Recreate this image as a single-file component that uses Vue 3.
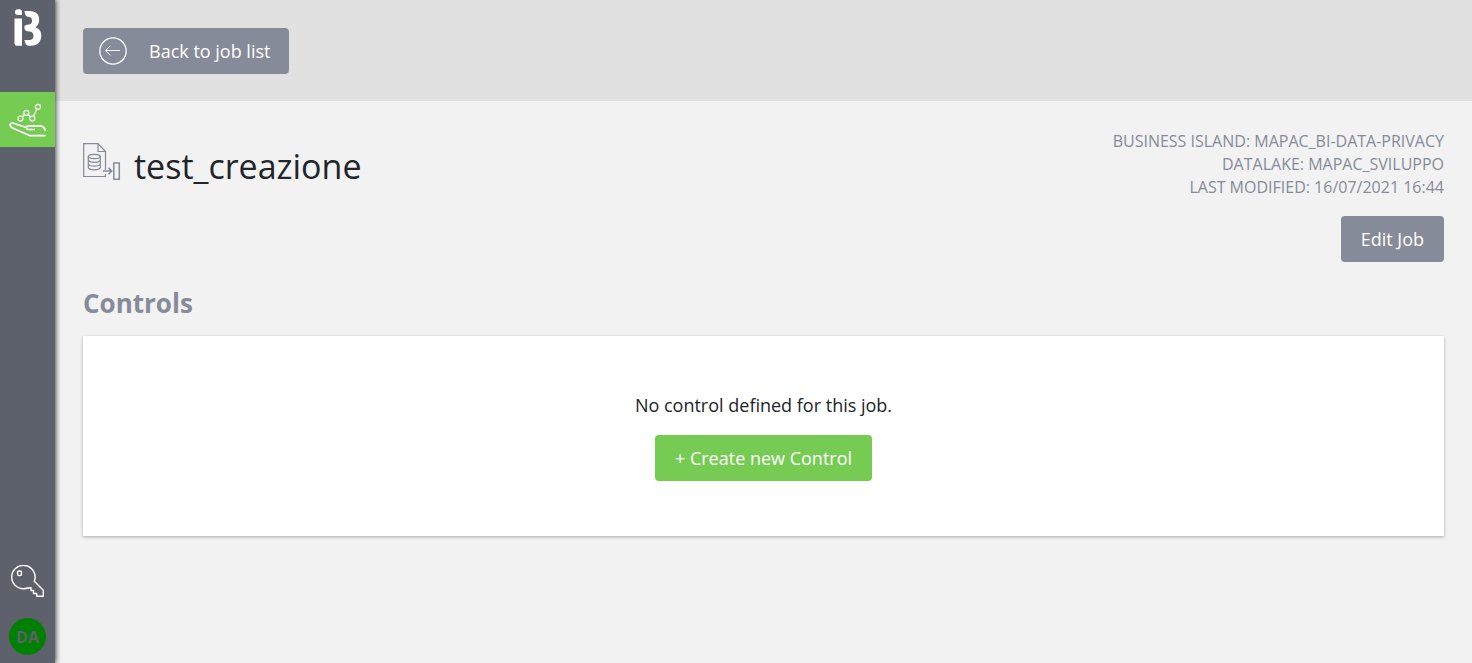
<script setup>
const details = [
  { label: 'Business Island', value: 'MAPAC_BI-data-privacy' },
  { label: 'Datalake', value: 'MAPAC_SVILUPPO' },
  { label: 'Last modified', value: '16/07/2021 16:44' },
]
</script>

<template>
  <div class="app">
    <aside class="sidebar">
      <a class="logo" href="#" aria-label="Home">
        <svg width="28" height="38" viewBox="0 0 28 38" fill="#fff">
          <path d="M1 3Q1 .3 4 .3H5.500Q8 .3 8 3V6H3.500Q1 5.500 1 4Z" />
          <path d="M0.500 9.500H8V36.700H3Q0.500 36.700 0.500 34.500Z" />
          <path d="M10.500 2H15.500C22 2 25.200 5.500 25.200 10.500C25.200 14 24 16.500 21.500 18.300C25.500 20 27.300 22.500 27.300 26.500C27.300 33 23.500 36.700 17 36.700H14.500Q11 36.300 10.500 31H16C18.500 31 19.500 29 19.500 26.800C19.500 24.500 18 22.500 15.500 22.500Q11.500 22.500 10.500 20V17Q11.500 15.500 14.500 15.500C17 15.500 18 14 18 12C18 9.500 17 8 15 8Q10.500 7.500 10.500 2Z" />
        </svg>
      </a>
      <nav class="nav">
        <a class="nav-item" href="#" aria-label="Jobs">
          <svg width="38" height="36" viewBox="0 0 38 36" fill="none" stroke="#fff" stroke-width="1.200">
            <circle cx="11.500" cy="16.500" r="2.500" />
            <circle cx="17.300" cy="10.800" r="2.500" />
            <circle cx="23.300" cy="16.500" r="2.500" />
            <circle cx="29" cy="4.800" r="2.500" />
            <path d="M13.200 14.700l2.300-2.200M19.100 12.500l2.400 2.200M24.400 14.200l3.500-7.200" />
            <g stroke-width="1.700">
              <path d="M26 27.500H19Q16 26 18.500 23.800H31.500Q35.500 24.500 36.500 29" />
              <path d="M17.500 25.500L3.800 21.200Q1 20.800 1 23Q1.500 25 3.500 26L21 33.700H36.500" />
            </g>
          </svg>
        </a>
      </nav>
      <a class="key" href="#" aria-label="Credentials">
        <svg width="34" height="34" viewBox="0 0 34 34" fill="none" stroke="#fff" stroke-width="1.400" stroke-linejoin="round">
          <path d="M16.500 23A11.700 11.700 0 1 1 23.300 16.300L32.300 25.200V31.300H25.700V28.500H22.500V25.500H20V22.800Z" />
          <rect x="6.500" y="6" width="4" height="4.500" rx="1.500" />
        </svg>
      </a>
      <button class="avatar" type="button">DA</button>
    </aside>

    <div class="page">
      <header class="topbar">
        <button class="btn back" type="button">
          <svg width="28" height="28" viewBox="0 0 28 28" fill="none" stroke="#fff">
            <circle cx="14" cy="14" r="13.200" stroke-width="1.300" />
            <path d="M21 13.500H6.500M11.500 8.700L6.500 13.500L11.500 18.300" stroke-width="0.900" />
          </svg>
          <span>Back to job list</span>
        </button>
      </header>

      <main class="content">
        <section class="job">
          <div class="title">
            <svg width="38" height="38" viewBox="0 0 38 38" fill="none" stroke="#868b9a" stroke-width="1.200">
              <path d="M22.500 27V8.500L15 .7H.7V33.500H22.500V31" />
              <path d="M15 .7V8.500H22.500" />
              <ellipse cx="11.300" cy="13.500" rx="6" ry="2.200" />
              <path d="M5.300 13.500V24.500Q6 26.800 11.300 26.800T17.300 24.500V13.500M5.300 17Q6 19.300 11.300 19.300T17.300 17M5.300 20.800Q6 23.100 11.300 23.100T17.300 20.800" />
              <path d="M20 28H28.500M25.500 24.800L28.700 28L25.500 31.200" stroke-width="1.500" />
              <rect x="30.800" y="20" width="5.500" height="16.300" stroke-width="1.500" />
            </svg>
            <h1>test_creazione</h1>
          </div>
          <div class="info">
            <p v-for="item in details" :key="item.label">{{ item.label }}: {{ item.value }}</p>
            <button class="btn edit" type="button">Edit Job</button>
          </div>
        </section>

        <section>
          <h2>Controls</h2>
          <div class="card">
            <p>No control defined for this job.</p>
            <button class="btn create" type="button">+ Create new Control</button>
          </div>
        </section>
      </main>
    </div>
  </div>
</template>

<style>
body {
  margin: 0;
  background: #f2f2f2;
}
</style>

<style scoped>
.app {
  display: flex;
  min-height: 100vh;
  font-family: "Segoe UI", "Open Sans", "Noto Sans", sans-serif;
  font-size: 18px;
  line-height: 28px;
  color: #212529;
  background: #f2f2f2;
}

h1,
h2,
p {
  margin: 0;
}

svg {
  display: block;
  flex: none;
}

.sidebar {
  display: flex;
  flex: none;
  flex-direction: column;
  align-items: center;
  box-sizing: border-box;
  width: 55px;
  padding: 9px 0 8px;
  background: #5d616c;
  box-shadow: 1px 0 5px rgba(0, 0, 0, 0.7);
  z-index: 1;
}

.nav {
  flex: 1;
  align-self: stretch;
  margin-top: 45px;
}

.nav-item {
  display: flex;
  align-items: center;
  justify-content: center;
  height: 55px;
  background: #76cc52;
}

.key {
  margin-bottom: 19px;
}

.avatar {
  width: 37px;
  height: 37px;
  padding: 0;
  border: 0;
  border-radius: 50%;
  background: #008000;
  color: #5d616c;
  font: bold 16px "Open Sans", sans-serif;
}

.page {
  flex: 1;
  min-width: 0;
}

.topbar {
  padding: 28px 28px 27px;
  background: #e1e1e1;
}

.btn {
  display: flex;
  align-items: center;
  justify-content: center;
  height: 46px;
  padding: 0 20px;
  border: 0;
  border-radius: 4px;
  background: #868b99;
  color: #fff;
  font: inherit;
  cursor: pointer;
}

.back {
  gap: 22px;
  padding: 0 19px 0 16px;
}

.content {
  padding: 28px;
}

.job {
  display: flex;
  justify-content: space-between;
}

.title {
  display: flex;
  align-items: flex-start;
  gap: 13px;
  padding-top: 14px;
}

h1 {
  font-size: 34px;
  font-weight: 400;
  line-height: 46px;
}

.info {
  display: flex;
  flex-direction: column;
  align-items: flex-end;
  padding-top: 1px;
  font-size: 16px;
  line-height: 23px;
  color: #868b99;
  text-transform: uppercase;
}

.edit {
  margin-top: 17px;
  font-size: 18px;
  text-transform: none;
}

h2 {
  margin-top: 24px;
  font-size: 26px;
  font-weight: 700;
  line-height: 34px;
  color: #868b99;
}

.card {
  display: flex;
  flex-direction: column;
  align-items: center;
  gap: 16px;
  margin-top: 16px;
  padding: 55px 20px;
  background: #fff;
  box-shadow: 0 1px 3px rgba(0, 0, 0, 0.3);
}

.create {
  background: #76cc52;
}
</style>
